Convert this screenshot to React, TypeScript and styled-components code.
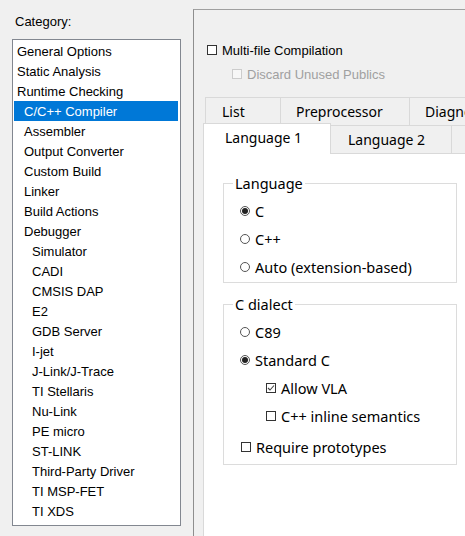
import React from "react";
import styled, { createGlobalStyle } from "styled-components";

const Global = createGlobalStyle`
  html, body {
    margin: 0;
    padding: 0;
    background: #f0f0f0;
    width: 465px;
    height: 536px;
    overflow: hidden;
  }
  * { box-sizing: border-box; }
`;

const Window = styled.div`
  display: flex;
  width: 465px;
  height: 536px;
  background: #f0f0f0;
  font-family: "Liberation Sans", Arial, sans-serif;
  color: #000;
`;

const Sidebar = styled.div`
  width: 193px;
  flex: none;
  padding-top: 14px;
  display: flex;
  flex-direction: column;
`;

const CategoryLabel = styled.div`
  margin-left: 15px;
  font-size: 13px;
  line-height: 16px;
`;

const ListBox = styled.div`
  margin-top: 9px;
  margin-left: 12px;
  width: 169px;
  height: 487px;
  border: 1px solid #828790;
  background: #fff;
  padding: 1px;
  display: flex;
  flex-direction: column;
`;

const ListItem = styled.div<{ $level: number; $selected?: boolean }>`
  height: 20px;
  display: flex;
  align-items: center;
  font-size: 13px;
  margin-right: 1px;
  padding-left: ${(p) => [3, 10, 18][p.$level]}px;
  background: ${(p) => (p.$selected ? "#0078d7" : "transparent")};
  color: ${(p) => (p.$selected ? "#fff" : "#000")};
  white-space: nowrap;
`;

const Panel = styled.div`
  flex: 1;
  margin-top: 9px;
  border-left: 1px solid #8e8e8e;
  border-top: 1px solid #a0a0a0;
  overflow: hidden;
  display: flex;
  flex-direction: column;
  padding-top: 31px;
`;

const CheckRow = styled.label<{ $indent: number; $disabled?: boolean }>`
  display: flex;
  align-items: center;
  height: 18px;
  margin-left: ${(p) => p.$indent}px;
  font-size: 13px;
  gap: 5px;
  color: ${(p) => (p.$disabled ? "#a0a0a0" : "#000")};
  & + & { margin-top: 6px; }
`;

const Box = styled.span<{ $disabled?: boolean }>`
  width: 10px;
  height: 10px;
  flex: none;
  border: 1px solid ${(p) => (p.$disabled ? "#cccccc" : "#333")};
  background: ${(p) => (p.$disabled ? "#f7f7f7" : "#fff")};
  display: inline-flex;
  align-items: center;
  justify-content: center;
`;

const TabControl = styled.div`
  margin-top: 14px;
  margin-left: 9px;
  width: 320px;
  flex: 1;
  display: flex;
  flex-direction: column;
  font-family: "Noto Sans", "Open Sans", sans-serif;
  font-size: 14px;
`;

const TabRow = styled.div`
  display: flex;
  height: 28px;
  padding-left: 2px;
  flex: none;
`;

const Tab = styled.div<{ $w: number; $pad: number; $selected?: boolean }>`
  width: ${(p) => p.$w}px;
  flex: none;
  height: ${(p) => (p.$selected ? 31 : 28)}px;
  margin: ${(p) => (p.$selected ? "-2px 0 0 -2px" : "0")};
  padding-left: ${(p) => p.$pad}px;
  padding-bottom: ${(p) => (p.$selected ? 4 : 0)}px;
  display: flex;
  align-items: center;
  border: 1px solid #d9d9d9;
  border-bottom: none;
  & + & { border-left: none; }
  background: ${(p) => (p.$selected ? "#fff" : "#f0f0f0")};
  position: relative;
  z-index: ${(p) => (p.$selected ? 2 : 0)};
  white-space: nowrap;
`;

const TabPage = styled.div`
  flex: 1;
  background: #fff;
  border-top: 1px solid #d9d9d9;
  border-left: 1px solid #d9d9d9;
  padding-top: 19px;
  padding-left: 19px;
  display: flex;
  flex-direction: column;
  font-size: 14.5px;
`;

const Group = styled.fieldset<{ $pb: number }>`
  width: 234px;
  margin: 0;
  padding: 4px 0 ${(p) => p.$pb}px 16px;
  border: 1px solid #dcdcdc;
  min-inline-size: auto;
  & + & { margin-top: 11px; }
`;

const Legend = styled.legend`
  padding: 0 2px;
  margin-left: -7px;
  line-height: 20px;
  height: 20px;
`;

const OptionRow = styled.div<{ $indent?: number; $gapTop?: number }>`
  display: flex;
  align-items: center;
  height: 28px;
  gap: 5px;
  margin-left: ${(p) => p.$indent ?? 0}px;
  margin-top: ${(p) => p.$gapTop ?? 0}px;
  white-space: nowrap;
`;

const RadioCircle = styled.span<{ $checked?: boolean }>`
  width: 10px;
  height: 10px;
  flex: none;
  border-radius: 50%;
  border: 1px solid #555;
  background: #fff;
  display: inline-flex;
  align-items: center;
  justify-content: center;
  &::after {
    content: "";
    width: 6px;
    height: 6px;
    border-radius: 50%;
    background: ${(p) => (p.$checked ? "#222" : "transparent")};
  }
`;

const Radio = ({ checked, label }: { checked?: boolean; label: string }) => (
  <OptionRow>
    <RadioCircle $checked={checked} />
    <span>{label}</span>
  </OptionRow>
);

const CheckMark = () => (
  <svg width="8" height="8" viewBox="0 0 8 8">
    <polyline points="1,4 3,6 7,1.5" fill="none" stroke="#444" strokeWidth="1.1" />
  </svg>
);

const Check = ({
  checked,
  label,
  indent,
  gapTop,
}: {
  checked?: boolean;
  label: string;
  indent?: number;
  gapTop?: number;
}) => (
  <OptionRow $indent={indent} $gapTop={gapTop}>
    <Box>{checked && <CheckMark />}</Box>
    <span>{label}</span>
  </OptionRow>
);

const categories: [string, number][] = [
  ["General Options", 0],
  ["Static Analysis", 0],
  ["Runtime Checking", 0],
  ["C/C++ Compiler", 1],
  ["Assembler", 1],
  ["Output Converter", 1],
  ["Custom Build", 1],
  ["Linker", 1],
  ["Build Actions", 1],
  ["Debugger", 1],
  ["Simulator", 2],
  ["CADI", 2],
  ["CMSIS DAP", 2],
  ["E2", 2],
  ["GDB Server", 2],
  ["I-jet", 2],
  ["J-Link/J-Trace", 2],
  ["TI Stellaris", 2],
  ["Nu-Link", 2],
  ["PE micro", 2],
  ["ST-LINK", 2],
  ["Third-Party Driver", 2],
  ["TI MSP-FET", 2],
  ["TI XDS", 2],
];

export default function App() {
  return (
    <>
      <Global />
      <Window>
        <Sidebar>
          <CategoryLabel>Category:</CategoryLabel>
          <ListBox>
            {categories.map(([name, level]) => (
              <ListItem key={name} $level={level} $selected={name === "C/C++ Compiler"}>
                {name}
              </ListItem>
            ))}
          </ListBox>
        </Sidebar>
        <Panel>
          <CheckRow $indent={13}>
            <Box />
            <span>Multi-file Compilation</span>
          </CheckRow>
          <CheckRow $indent={38} $disabled>
            <Box $disabled />
            <span>Discard Unused Publics</span>
          </CheckRow>
          <TabControl>
            <TabRow>
              <Tab $w={76} $pad={16}>List</Tab>
              <Tab $w={129} $pad={15}>Preprocessor</Tab>
              <Tab $w={120} $pad={15}>Diagnostics</Tab>
            </TabRow>
            <TabRow>
              <Tab $w={128} $pad={21} $selected>Language 1</Tab>
              <Tab $w={121} $pad={17}>Language 2</Tab>
              <Tab $w={120} $pad={24}>Code</Tab>
            </TabRow>
            <TabPage>
              <Group $pb={1}>
                <Legend>Language</Legend>
                <Radio checked label="C" />
                <Radio label="C++" />
                <Radio label="Auto (extension-based)" />
              </Group>
              <Group $pb={3}>
                <Legend>C dialect</Legend>
                <Radio label="C89" />
                <Radio checked label="Standard C" />
                <Check checked label="Allow VLA" indent={26} />
                <Check label="C++ inline semantics" indent={26} />
                <Check label="Require prototypes" indent={1} gapTop={3} />
              </Group>
            </TabPage>
          </TabControl>
        </Panel>
      </Window>
    </>
  );
}
